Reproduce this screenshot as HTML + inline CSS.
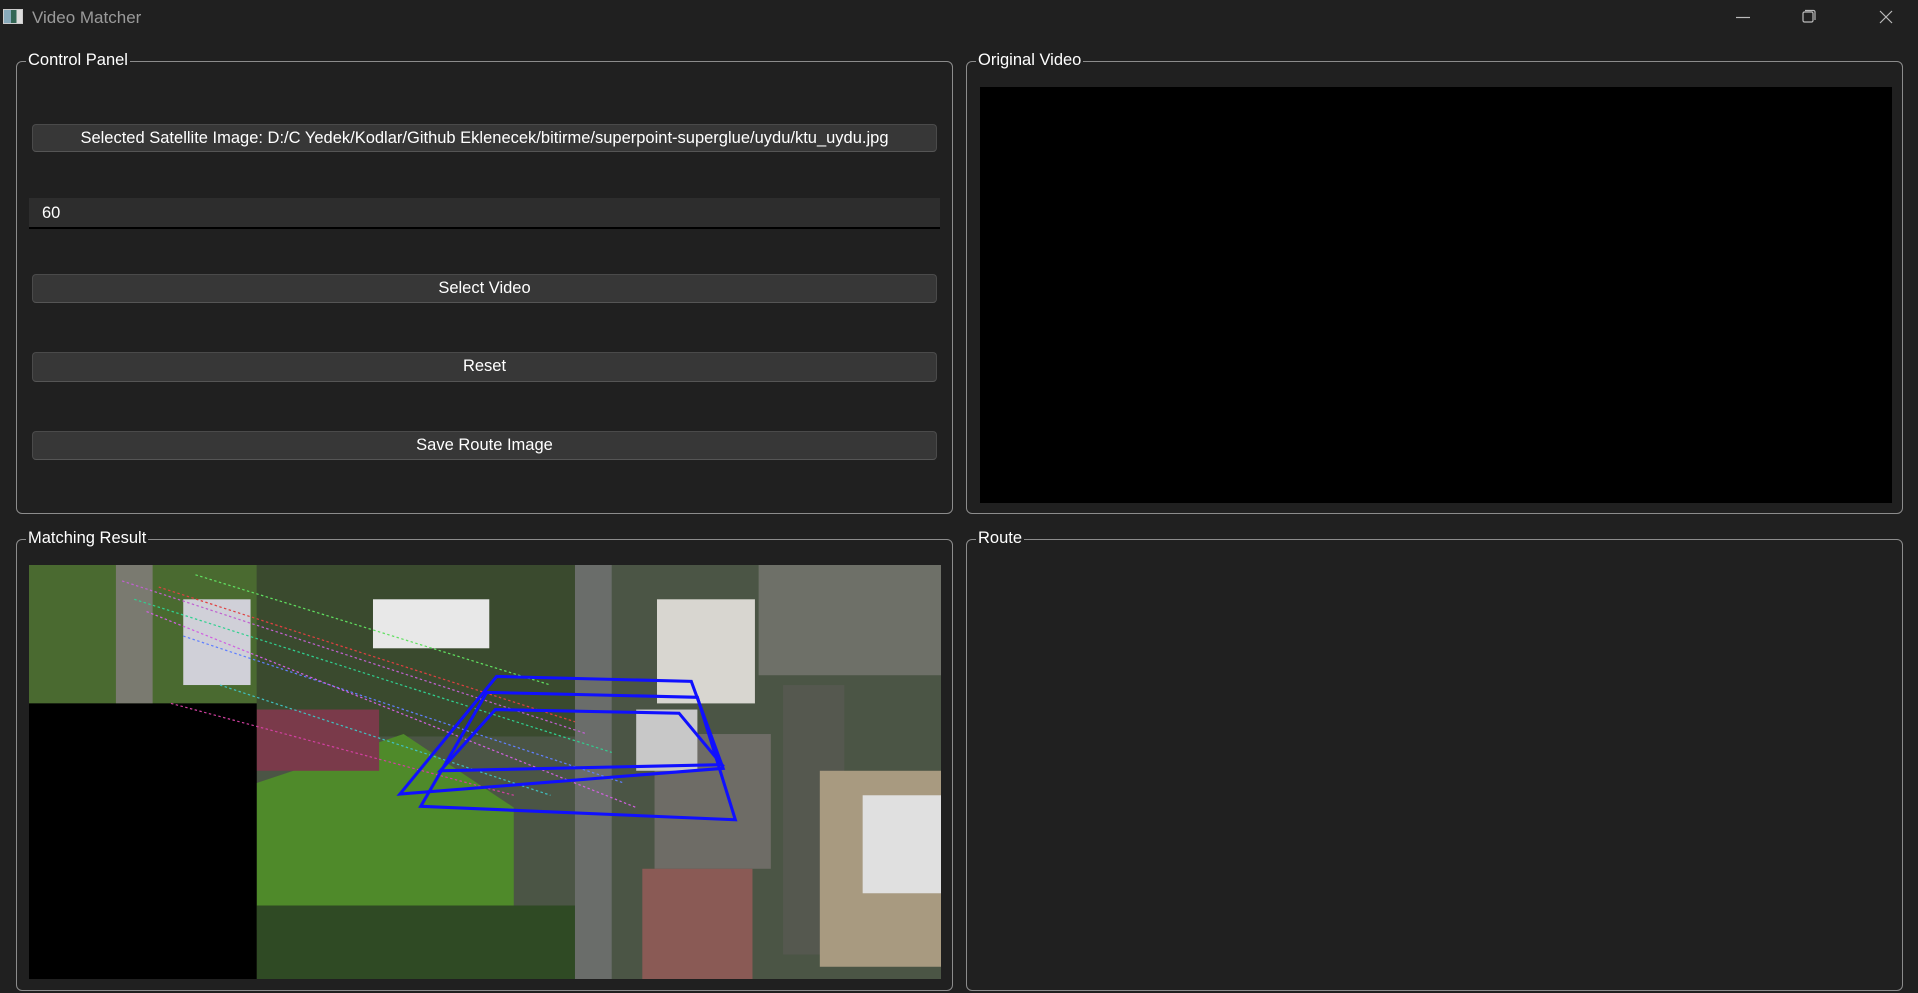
<!DOCTYPE html>
<html><head><meta charset="utf-8"><style>
*{box-sizing:border-box;margin:0;padding:0}
body{width:1918px;height:993px;background:#202020;font-family:"Liberation Sans",sans-serif;color:#fff;position:relative;overflow:hidden}
.title{position:absolute;left:0;top:0;width:1918px;height:36px;background:#202020}
.title .t{position:absolute;left:32px;top:8px;font-size:17px;color:#9a9a9a}
.icon{position:absolute;left:3px;top:9px;width:20px;height:15px;background:linear-gradient(90deg,#8ab 0 40%,#365 40% 70%,#ddd 70%);border:1px solid #ccc}
.g{position:absolute;border:1.5px solid #8c8c8c;border-radius:6px}
.g .l{position:absolute;left:9px;top:-11px;background:#202020;padding:0 2px;font-size:16.5px;color:#fff}
.btn{position:absolute;background:#373737;border:1px solid #4a4a4a;border-bottom-color:#555;border-radius:4px;font-size:16.5px;text-align:center;line-height:27px;color:#fff}
.inp{position:absolute;background:#2d2d2d;border-bottom:2px solid #000;font-size:16.5px;line-height:30px;padding-left:13px}
</style></head><body>
<div class="title"><div class="icon"></div><div class="t">Video Matcher</div>
<svg style="position:absolute;left:1730px;top:8px" width="180" height="20" fill="none" stroke="#bbb" stroke-width="1.2">
<path d="M6 9.5H20"/>
<rect x="73" y="4" width="10" height="10" rx="1.5"/><path d="M75 2.5H83.5a1.5 1.5 0 0 1 1.5 1.5V12"/>
<path d="M150 3L162 15M162 3L150 15"/>
</svg></div>

<div class="g" style="left:16px;top:61px;width:937px;height:453px"><div class="l">Control Panel</div></div>
<div class="btn" style="left:32px;top:124px;width:905px;height:28px">Selected Satellite Image: D:/C Yedek/Kodlar/Github Eklenecek/bitirme/superpoint-superglue/uydu/ktu_uydu.jpg</div>
<div class="inp" style="left:29px;top:198px;width:911px;height:31px">60</div>
<div class="btn" style="left:32px;top:274px;width:905px;height:29px">Select Video</div>
<div class="btn" style="left:32px;top:352px;width:905px;height:30px">Reset</div>
<div class="btn" style="left:32px;top:431px;width:905px;height:29px">Save Route Image</div>

<div class="g" style="left:966px;top:61px;width:937px;height:453px"><div class="l">Original Video</div></div>
<div style="position:absolute;left:980px;top:87px;width:912px;height:416px;background:#000"></div>

<div class="g" style="left:16px;top:539px;width:937px;height:452px"><div class="l">Matching Result</div></div>
<div class="g" style="left:966px;top:539px;width:937px;height:452px"><div class="l">Route</div></div>

<svg style="position:absolute;left:29px;top:565px" width="912" height="414" viewBox="24 462 745 338" preserveAspectRatio="none">
<rect x="210" y="462" width="559" height="338" fill="#4b5545"/>
<rect x="210" y="462" width="270" height="140" fill="#3a4a2e"/>
<polygon points="210,640 330,600 420,660 420,740 260,760 210,760" fill="#4f8a2a"/>
<rect x="210" y="740" width="260" height="60" fill="#2f4a24"/>
<rect x="470" y="462" width="30" height="338" fill="#6a6d6a"/>
<rect x="305" y="490" width="95" height="40" fill="#e8e8e8"/>
<rect x="537" y="490" width="80" height="85" fill="#d8d6d0"/>
<rect x="535" y="600" width="95" height="110" fill="#6e6c66"/>
<rect x="520" y="580" width="50" height="50" fill="#c8c8c8"/>
<rect x="525" y="710" width="90" height="90" fill="#8a5a55"/>
<rect x="620" y="462" width="149" height="90" fill="#6e7068"/>
<rect x="640" y="560" width="50" height="220" fill="#55584f"/>
<rect x="670" y="630" width="99" height="160" fill="#a89a80"/>
<rect x="705" y="650" width="64" height="80" fill="#e0e0e0"/>
<rect x="210" y="580" width="100" height="50" fill="#7a3a4a"/>
<rect x="24" y="462" width="186" height="113" fill="#4a6a30"/>
<rect x="95" y="462" width="30" height="113" fill="#7a7a70"/>
<rect x="150" y="490" width="55" height="70" fill="#d0d0d8"/>
<rect x="24" y="575" width="186" height="225" fill="#000"/>
<g stroke-width="1" stroke-dasharray="2,2" fill="none">
<path d="M100 475 L480 600" stroke="#c060d0"/><path d="M110 490 L500 615" stroke="#30d090"/>
<path d="M130 480 L470 590" stroke="#e04040"/><path d="M150 520 L510 640" stroke="#6080ff"/>
<path d="M140 575 L420 650" stroke="#d040a0"/><path d="M180 560 L450 650" stroke="#40c0c0"/>
<path d="M120 500 L520 660" stroke="#d060e0"/><path d="M160 470 L450 560" stroke="#60e060"/>
</g>
<g stroke="#1010ff" stroke-width="2.5" fill="none">
<polygon points="406,553 565,557 591,628 327,649"/>
<polygon points="398,566 570,570 601,670 344,659"/>
<polygon points="405,580 555,583 590,625 360,630"/>
</g>
</svg>
</body></html>
